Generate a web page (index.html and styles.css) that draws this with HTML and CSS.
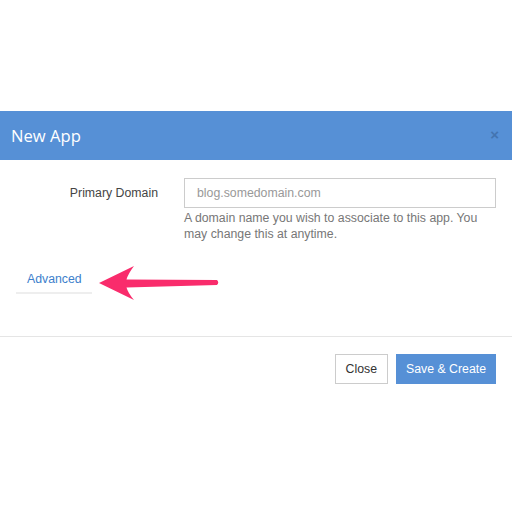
FILE: index.html
```html
<!DOCTYPE html>
<html>
<head>
<meta charset="utf-8">
<link rel="stylesheet" href="styles.css">
</head>
<body>
<div class="modal">
  <div class="modal-header">
    <span class="modal-title">New App</span>
    <span class="modal-close">×</span>
  </div>
  <div class="modal-body">
    <div class="form-row">
      <label class="form-label">Primary Domain</label>
      <div class="form-field">
        <div class="input">blog.somedomain.com</div>
        <p class="help">A domain name you wish to associate to this app. You may change this at anytime.</p>
      </div>
    </div>
    <div class="advanced-row">
      <a class="advanced">Advanced</a>
      <svg class="arrow" width="124" height="38" viewBox="0 0 124 38">
        <path d="M2,19 L37,2 Q31,10 29.5,15.5 L120,16 Q122.5,18.5 120,21 L29.5,23.5 Q31,29 37,36 Z" fill="#f92c6c"/>
      </svg>
    </div>
  </div>
  <div class="modal-footer">
    <button class="btn btn-default">Close</button>
    <button class="btn btn-primary">Save &amp; Create</button>
  </div>
</div>
</body>
</html>
```

FILE: styles.css
```css
html, body {
  margin: 0;
  padding: 0;
  background: #ffffff;
}
body {
  font-family: "Liberation Sans", Arial, sans-serif;
  font-size: 12.3px;
  color: #333;
}
.modal {
  margin-top: 111px;
}
.modal-header {
  height: 49px;
  background: #5690d6;
  display: flex;
  align-items: center;
  justify-content: space-between;
  padding: 0 13px 0 11px;
  box-sizing: border-box;
}
.modal-title {
  font-family: "Open Sans", sans-serif;
  font-size: 16.6px;
  color: #ffffff;
}
.modal-close {
  font-family: "Liberation Sans", Arial, sans-serif;
  font-size: 15px;
  font-weight: bold;
  color: #3f6ea8;
  opacity: 0.8;
  margin-top: -3px;
}
.modal-body {
  padding-top: 18px;
  height: 177px;
  box-sizing: border-box;
  border-bottom: 1px solid #e5e5e5;
}
.form-row {
  display: flex;
  gap: 26px;
}
.form-label {
  width: 158px;
  text-align: right;
  line-height: 30px;
  color: #444;
  flex: none;
}
.form-field {
  width: 312px;
}
.input {
  height: 30px;
  box-sizing: border-box;
  border: 1px solid #cccccc;
  padding: 0 12px;
  line-height: 28px;
  color: #999;
}
.help {
  margin: 0;
  padding-top: 2px;
  line-height: 16px;
  color: #777;
}
.advanced-row {
  display: flex;
  align-items: flex-start;
  margin-top: 23px;
  padding-left: 16px;
}
.advanced {
  display: block;
  width: 76px;
  box-sizing: border-box;
  padding: 6px 11px 5px;
  border-bottom: 2px solid #eeeeee;
  color: #3d7fcc;
  text-decoration: none;
  line-height: 16px;
}
.arrow {
  display: block;
  margin-left: 5px;
  margin-top: -1px;
}
.modal-footer {
  display: flex;
  justify-content: flex-end;
  gap: 8px;
  padding: 17px 16px 0 0;
}
.btn {
  height: 30px;
  font-family: "Liberation Sans", Arial, sans-serif;
  font-size: 12.3px;
  padding: 0 10px;
  border: 1px solid #cccccc;
  border-radius: 0;
  background: #ffffff;
  color: #333;
  margin: 0;
}
.btn-primary {
  background: #5690d6;
  border-color: #5690d6;
  color: #ffffff;
  padding: 0 9px;
}
```
